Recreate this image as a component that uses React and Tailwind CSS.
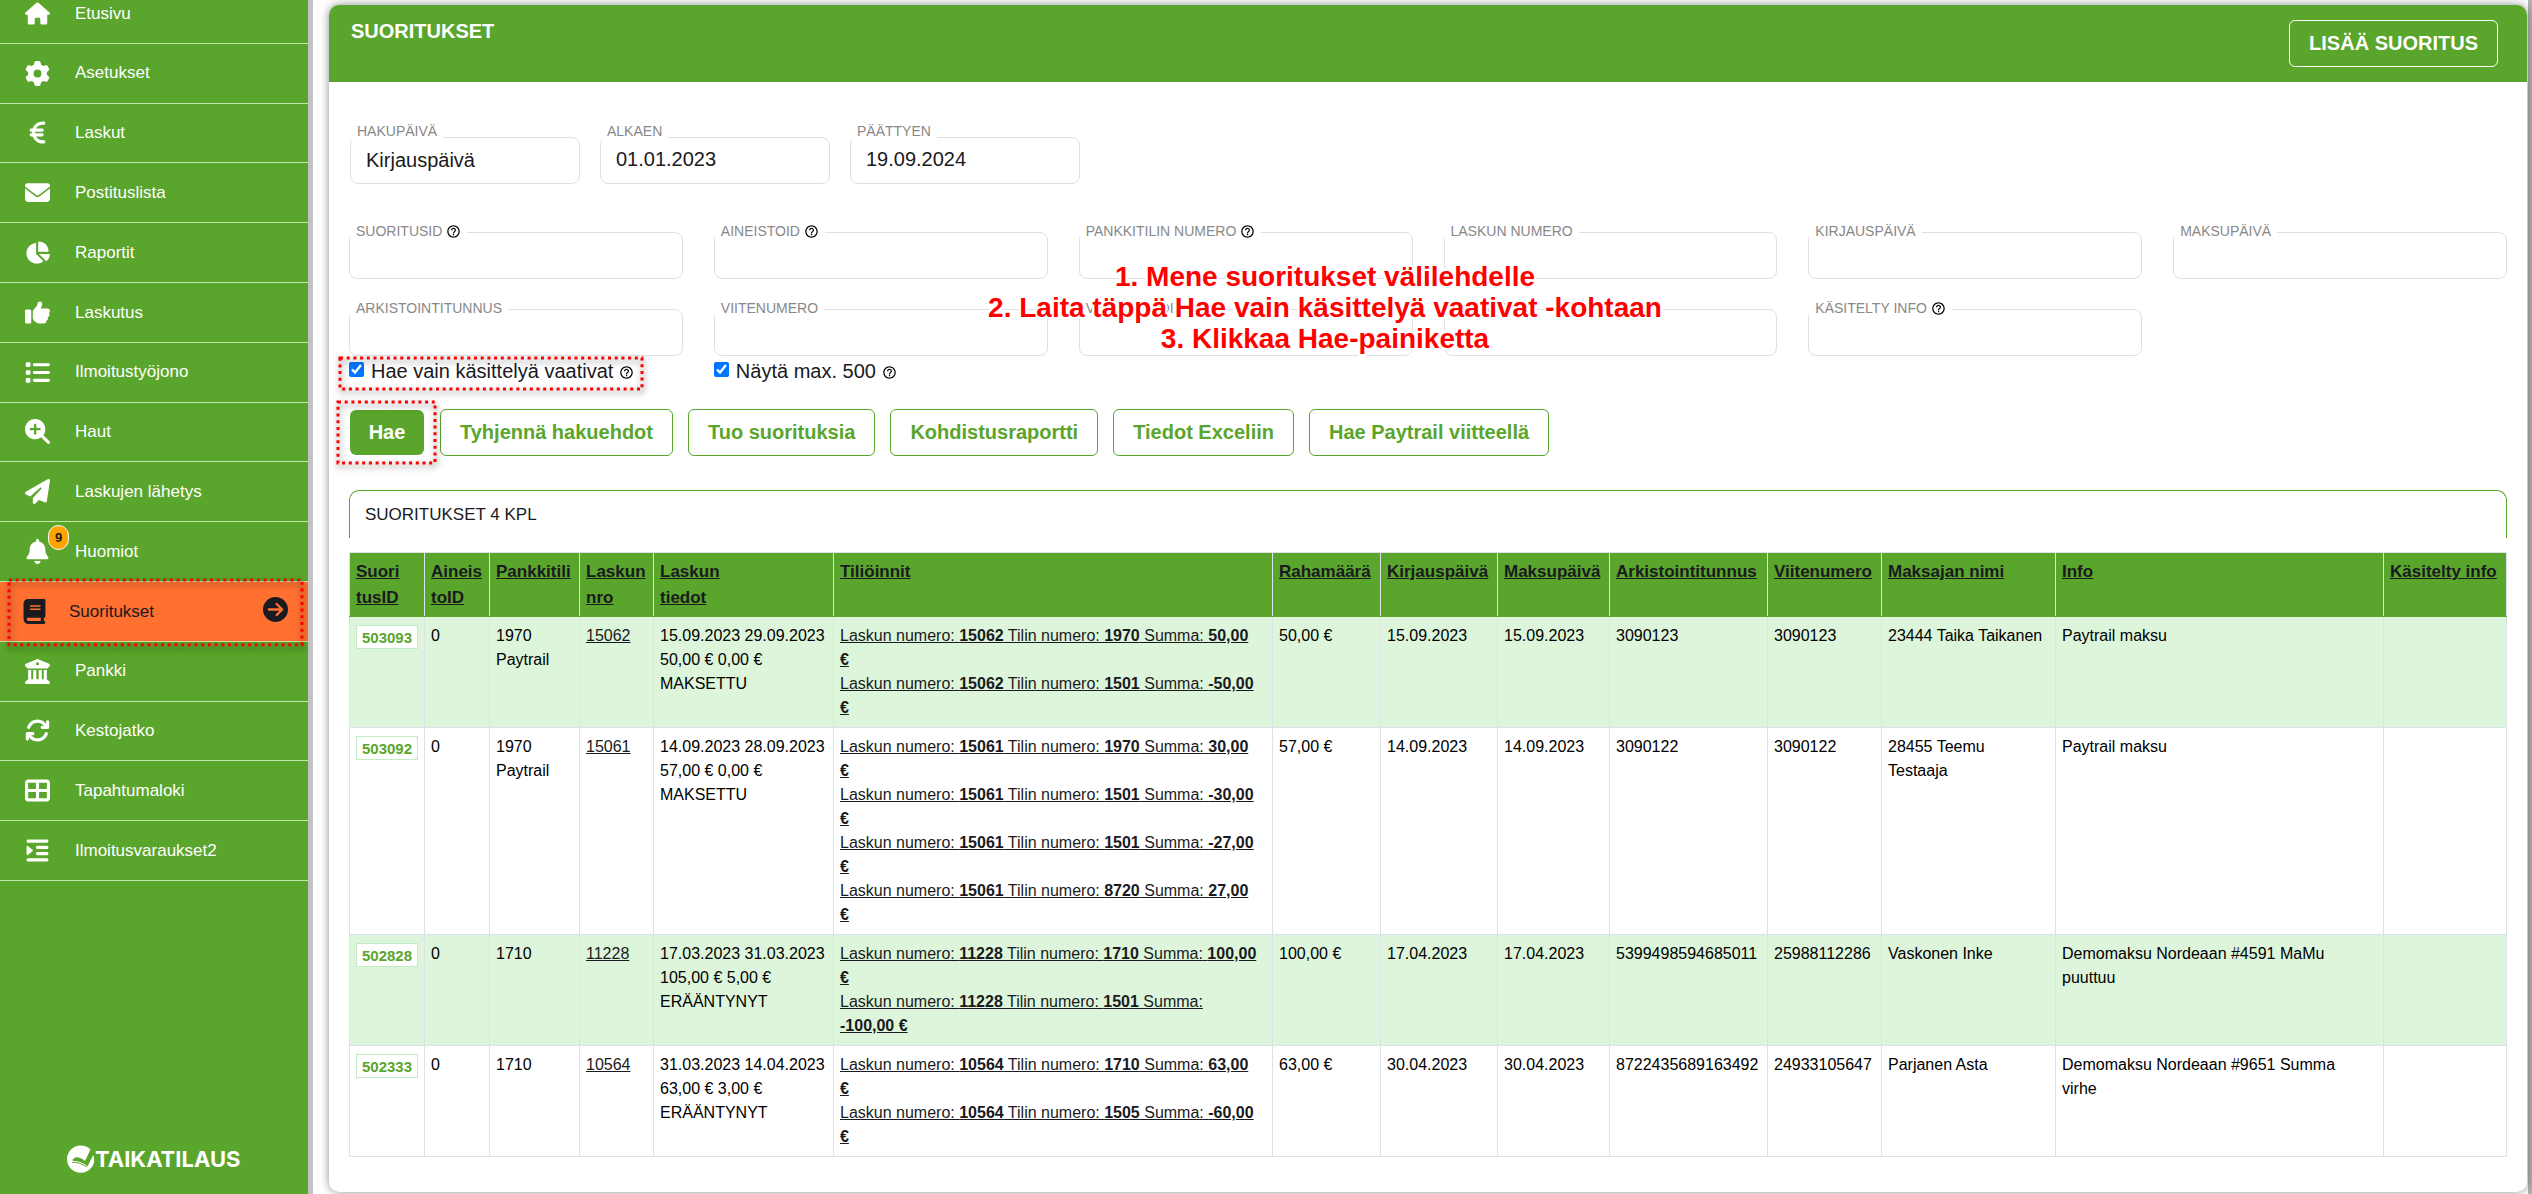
import { Fragment } from "react";
import {
  FaArrowsRotate,
  FaBell,
  FaBook,
  FaBuildingColumns,
  FaChartPie,
  FaCircleArrowRight,
  FaEnvelope,
  FaEuroSign,
  FaGear,
  FaHouse,
  FaIndent,
  FaList,
  FaMagnifyingGlassPlus,
  FaPaperPlane,
  FaTableCellsLarge,
  FaThumbsUp,
} from "react-icons/fa6";
import { MdHelpOutline } from "react-icons/md";

const MENU = [
  { label: "Etusivu", icon: FaHouse },
  { label: "Asetukset", icon: FaGear },
  { label: "Laskut", icon: FaEuroSign },
  { label: "Postituslista", icon: FaEnvelope },
  { label: "Raportit", icon: FaChartPie },
  { label: "Laskutus", icon: FaThumbsUp },
  { label: "Ilmoitustyöjono", icon: FaList },
  { label: "Haut", icon: FaMagnifyingGlassPlus },
  { label: "Laskujen lähetys", icon: FaPaperPlane },
  { label: "Huomiot", icon: FaBell, count: 9 },
  { label: "Suoritukset", icon: FaBook, active: true },
  { label: "Pankki", icon: FaBuildingColumns },
  { label: "Kestojatko", icon: FaArrowsRotate },
  { label: "Tapahtumaloki", icon: FaTableCellsLarge },
  { label: "Ilmoitusvaraukset2", icon: FaIndent },
];

const FIELDS = [
  { id: "suoritusid", label: "SUORITUSID", help: true },
  { id: "aineistoid", label: "AINEISTOID", help: true },
  { id: "pankkitili", label: "PANKKITILIN NUMERO", help: true },
  { id: "laskunro", label: "LASKUN NUMERO" },
  { id: "kirjauspaiva", label: "KIRJAUSPÄIVÄ" },
  { id: "maksupaiva", label: "MAKSUPÄIVÄ" },
  { id: "arkistointitunnus", label: "ARKISTOINTITUNNUS" },
  { id: "viitenumero", label: "VIITENUMERO" },
  { id: "virhekoodi", label: "VIRHEKOODI" },
  { id: "maksaja", label: "MAKSAJA" },
  { id: "kasitelty", label: "KÄSITELTY INFO", help: true },
];

const ACTIONS = [
  "Tyhjennä hakuehdot",
  "Tuo suorituksia",
  "Kohdistusraportti",
  "Tiedot Exceliin",
  "Hae Paytrail viitteellä",
];

const COLUMNS = [
  { label: "Suori\ntusID", width: "w-[75px]" },
  { label: "Aineis\ntoID", width: "w-[65px]" },
  { label: "Pankkitili", width: "w-[90px]" },
  { label: "Laskun\nnro", width: "w-[74px]" },
  { label: "Laskun\ntiedot", width: "w-[180px]" },
  { label: "Tiliöinnit", width: "w-[439px]" },
  { label: "Rahamäärä", width: "w-[108px]" },
  { label: "Kirjauspäivä", width: "w-[117px]" },
  { label: "Maksupäivä", width: "w-[112px]" },
  { label: "Arkistointitunnus", width: "w-[158px]" },
  { label: "Viitenumero", width: "w-[114px]" },
  { label: "Maksajan nimi", width: "w-[174px]" },
  { label: "Info", width: "w-[328px]" },
  { label: "Käsitelty info", width: "w-[123px]" },
];

const ROWS = [
  {
    id: "503093",
    account: "1970\nPaytrail",
    invoice: "15062",
    details: "15.09.2023 29.09.2023\n50,00 € 0,00 €\nMAKSETTU",
    entries: [
      ["1970", "50,00\n€"],
      ["1501", "-50,00\n€"],
    ],
    amount: "50,00 €",
    date: "15.09.2023",
    archive: "3090123",
    reference: "3090123",
    payer: "23444 Taika Taikanen",
    info: "Paytrail maksu",
  },
  {
    id: "503092",
    account: "1970\nPaytrail",
    invoice: "15061",
    details: "14.09.2023 28.09.2023\n57,00 € 0,00 €\nMAKSETTU",
    entries: [
      ["1970", "30,00\n€"],
      ["1501", "-30,00\n€"],
      ["1501", "-27,00\n€"],
      ["8720", "27,00\n€"],
    ],
    amount: "57,00 €",
    date: "14.09.2023",
    archive: "3090122",
    reference: "3090122",
    payer: "28455 Teemu\nTestaaja",
    info: "Paytrail maksu",
  },
  {
    id: "502828",
    account: "1710",
    invoice: "11228",
    details: "17.03.2023 31.03.2023\n105,00 € 5,00 €\nERÄÄNTYNYT",
    entries: [
      ["1710", "100,00\n€"],
      ["1501", "\n-100,00 €"],
    ],
    amount: "100,00 €",
    date: "17.04.2023",
    archive: "5399498594685011",
    reference: "25988112286",
    payer: "Vaskonen Inke",
    info: "Demomaksu Nordeaan #4591 MaMu\npuuttuu",
  },
  {
    id: "502333",
    account: "1710",
    invoice: "10564",
    details: "31.03.2023 14.04.2023\n63,00 € 3,00 €\nERÄÄNTYNYT",
    entries: [
      ["1710", "63,00\n€"],
      ["1505", "-60,00\n€"],
    ],
    amount: "63,00 €",
    date: "30.04.2023",
    archive: "8722435689163492",
    reference: "24933105647",
    payer: "Parjanen Asta",
    info: "Demomaksu Nordeaan #9651 Summa\nvirhe",
  },
];

export default function App() {
  return (
    <div className="flex min-h-screen items-stretch bg-white font-['Liberation_Sans',Arial,sans-serif] text-[#1a1a21]">
      <Sidebar />
      <main className="min-w-0 flex-1 border-r-4 border-[#b2b2b2] pt-[5px] pr-px pl-4">
        <div className="rounded-[10px] bg-white shadow-[0_0_10px_rgba(0,0,0,0.45)]">
          <header className="flex items-start justify-between rounded-t-[10px] bg-[#5aa52b] px-[22px] pt-[15px] pr-[29px] pb-[15px] text-white">
            <h1 className="text-[20px] leading-[23px] font-bold">SUORITUKSET</h1>
            <button className="h-[47px] rounded-md border border-white px-[19px] pb-[2px] text-[20px] font-bold">
              LISÄÄ SUORITUS
            </button>
          </header>
          <div className="px-5 pt-[55px] pb-[35px]">
            <SearchForm />
            <div className="mt-[34px] mb-[14px] h-12 rounded-t-[10px] border border-b-0 border-[#5aa52b] px-[15px] text-[17px] leading-[47px]">
              SUORITUKSET 4 KPL
            </div>
            <PaymentsTable />
          </div>
        </div>
      </main>
    </div>
  );
}

/* ================= SIDEBAR ================= */
function Sidebar() {
  return (
    <aside className="flex w-[313px] shrink-0 flex-col justify-between overflow-hidden border-r-[5px] border-[#c3c3c3] bg-[#5aa52b]">
      <nav className="-mt-4">
        <ul className="grid h-[897px] auto-rows-fr">
          {MENU.map((item) => (
            <MenuItem key={item.label} {...item} />
          ))}
        </ul>
      </nav>
      <div className="mb-[21px] flex items-center pl-[67px] text-white">
        <Logo />
        <span className="font-['Inter',sans-serif] text-[22px] leading-[28px] font-bold">TAIKATILAUS</span>
      </div>
    </aside>
  );
}

function MenuItem({ label, icon: Icon, active, count }) {
  if (active) {
    return (
      <li className="relative border-b border-[#c5e6a8] bg-[#ff7031]">
        <a href="#" className="flex h-full items-center pr-5 pl-[22px] text-[17px]">
          <Icon className="size-[25px]" />
          <span className="ml-[22px] flex-1">{label}</span>
          <FaCircleArrowRight className="mb-1 size-[25px]" />
        </a>
        <Highlight className="-top-[2px] right-[6px] -bottom-[4px] left-[9px]" />
      </li>
    );
  }

  return (
    <li className="border-b border-[#c5e6a8]">
      <a href="#" className="relative flex h-full items-center text-[17px] text-white">
        <span className="flex w-[75px] justify-center">
          <Icon className="size-[25px]" />
        </span>
        {count && (
          <span className="absolute top-[3px] left-[48px] flex h-[25px] w-[21px] items-center justify-center rounded-full border border-white bg-[#ffa500] text-[13px] font-bold text-[#1a1a21]">
            {count}
          </span>
        )}
        {label}
      </a>
    </li>
  );
}

function Logo() {
  return (
    <svg viewBox="0 0 28 28" className="size-7" aria-hidden="true">
      <path
        fill="currentColor"
        d="M23.5 4.5A13.7 13.7 0 1 0 27 17.5c.4-2.600 .2-5-.7-7.500L20.500 21.500c-4-4-9-5.500-14.500-5.500 0-2 1-3.500 3-3.700 3.500.2 6.500 1.500 9 3.700z"
      />
      <path stroke="#5aa52b" fill="none" d="M5 17.500c5-.5 10 1 14.500 4.500M5.500 15c5-1 9 .5 12.500 3" />
    </svg>
  );
}

/* ================= SEARCH ================= */
function SearchForm() {
  return (
    <form className="relative">
      <div className="flex gap-5 px-px">
        <div className="relative w-[230px]">
          <FieldLabel htmlFor="hakupaiva" label="HAKUPÄIVÄ" raised />
          <select
            id="hakupaiva"
            className="block h-[47px] w-full appearance-none rounded-lg border border-[#dfe0e6] bg-white px-[15px] pb-[2px] text-[20px]"
          >
            <option>Kirjauspäivä</option>
          </select>
        </div>
        <DateField id="alkaen" label="ALKAEN" value="01.01.2023" />
        <DateField id="paattyen" label="PÄÄTTYEN" value="19.09.2024" />
      </div>

      <div className="mt-12 grid grid-cols-6 gap-x-[31px] gap-y-[30px]">
        {FIELDS.map((field) => (
          <div key={field.id} className="relative">
            <FieldLabel htmlFor={field.id} label={field.label} help={field.help} />
            <input
              id={field.id}
              type="text"
              className="block h-[47px] w-full rounded-lg border border-[#dfe0e6] px-[15px] text-[20px]"
            />
          </div>
        ))}
      </div>

      <div className="grid grid-cols-6 gap-x-[31px]">
        <div className="relative">
          <Check id="vaativat" label="Hae vain käsittelyä vaativat" />
          <Highlight className="top-[2px] -left-[9px] h-[31px] w-[302px]" />
        </div>
        <Check id="max500" label="Näytä max. 500" />
      </div>

      <div className="mt-6 flex items-center gap-[15px]">
        <div className="relative px-px">
          <button
            type="button"
            className="block h-[45px] w-[74px] rounded-md bg-[#5aa52b] pb-[2px] text-[20px] font-bold text-white"
          >
            Hae
          </button>
          <Highlight className="-inset-y-[8px] -right-[10px] -left-[11px]" />
        </div>
        {ACTIONS.map((action) => (
          <button
            key={action}
            type="button"
            className="h-[47px] rounded-md border border-[#5aa52b] px-[19px] pb-[2px] text-[20px] font-bold text-[#5aa52b]"
          >
            {action}
          </button>
        ))}
      </div>

      <Instructions />
    </form>
  );
}

function DateField({ id, label, value }) {
  return (
    <div className="relative w-[230px]">
      <FieldLabel htmlFor={id} label={label} raised />
      <input
        id={id}
        type="text"
        defaultValue={value}
        className="block h-[47px] w-full rounded-lg border border-[#dfe0e6] px-[15px] pb-[2px] text-[20px]"
      />
    </div>
  );
}

function FieldLabel({ htmlFor, label, help, raised }) {
  return (
    <label
      htmlFor={htmlFor}
      className={
        raised
          ? "absolute -top-[14px] left-px flex items-center gap-1 bg-white px-[6px] text-[14px] leading-[17px] text-[#888]"
          : "absolute -top-[9px] left-px flex items-center gap-1 bg-white px-[6px] text-[14px] leading-[17px] text-[#888]"
      }
    >
      {label}
      {help && <MdHelpOutline className="size-[15px] text-black" />}
    </label>
  );
}

function Check({ id, label }) {
  return (
    <div className="flex h-[29px] items-center">
      <input id={id} type="checkbox" defaultChecked className="mb-[2px] size-[15px] accent-[#0075ff]" />
      <label htmlFor={id} className="ml-[7px] flex items-center gap-[6px] text-[20px] leading-[28px]">
        {label}
        <MdHelpOutline className="mt-1 size-[15px] text-black" />
      </label>
    </div>
  );
}

/* ================= GUIDE MARKS ================= */
function Highlight({ className }) {
  return (
    <div className={`pointer-events-none absolute z-10 ${className}`}>
      <svg className="block size-full overflow-visible drop-shadow-[1px_3px_3px_rgba(0,0,0,0.6)]" aria-hidden="true">
        <rect width="100%" height="100%" fill="none" stroke="#f00" strokeWidth="3" strokeDasharray="3 3.7" />
      </svg>
    </div>
  );
}

function Instructions() {
  return (
    <div className="pointer-events-none absolute top-[124px] left-[976px] -translate-x-1/2 text-center text-[28px] leading-[31px] font-bold whitespace-nowrap text-[#f00] [text-shadow:2px_0_#fff,-2px_0_#fff,0_2px_#fff,0_-2px_#fff,2px_2px_#fff,-2px_-2px_#fff,2px_-2px_#fff,-2px_2px_#fff]">
      <p>1. Mene suoritukset välilehdelle</p>
      <p>2. Laita täppä Hae vain käsittelyä vaativat -kohtaan</p>
      <p>3. Klikkaa Hae-painiketta</p>
    </div>
  );
}

/* ================= TABLE ================= */
function PaymentsTable() {
  return (
    <table className="w-full table-fixed border-collapse text-[16px] leading-[24px] text-black">
      <colgroup>
        {COLUMNS.map((column) => (
          <col key={column.label} className={column.width} />
        ))}
      </colgroup>
      <thead>
        <tr className="bg-[#5aa52b]">
          {COLUMNS.map((column) => (
            <th
              key={column.label}
              className="border border-[#dee2e6] border-b-[#5aa52b] px-[6px] pt-[6px] pb-[5px] text-left align-top text-[17px] leading-[26px] font-bold whitespace-pre text-[#1a1a21]"
            >
              <a href="#" className="underline">{column.label}</a>
            </th>
          ))}
        </tr>
      </thead>
      <tbody>
        {ROWS.map((row) => (
          <tr key={row.id} className="odd:bg-[#ddf5da]">
            <Cell>
              <a
                href="#"
                className="mt-px block h-6 w-[62px] border border-[#c0ebc4] bg-white text-center text-[15px] leading-[23px] font-bold text-[#5aa52b]"
              >
                {row.id}
              </a>
            </Cell>
            <Cell>0</Cell>
            <Cell>{row.account}</Cell>
            <Cell>
              <a href="#" className="text-[#1a1a21] underline">{row.invoice}</a>
            </Cell>
            <Cell>{row.details}</Cell>
            <Cell>
              {row.entries.map(([account, sum]) => (
                <Entry key={account + sum} invoice={row.invoice} account={account} sum={sum} />
              ))}
            </Cell>
            <Cell>{row.amount}</Cell>
            <Cell>{row.date}</Cell>
            <Cell>{row.date}</Cell>
            <Cell>{row.archive}</Cell>
            <Cell>{row.reference}</Cell>
            <Cell>{row.payer}</Cell>
            <Cell>{row.info}</Cell>
            <Cell />
          </tr>
        ))}
      </tbody>
    </table>
  );
}

function Entry({ invoice, account, sum }) {
  return (
    <a href="#" className="block text-[#1a1a21] underline">
      Laskun numero: <b>{invoice}</b> Tilin numero: <b>{account}</b> Summa:{" "}
      {sum.split("\n").map((part, index) => (
        <Fragment key={index}>
          {index > 0 && <br />}
          {part && <b>{part}</b>}
        </Fragment>
      ))}
    </a>
  );
}

function Cell({ children }) {
  return <td className="border border-[#dee2e6] px-[6px] py-[7px] align-top whitespace-pre-line">{children}</td>;
}
